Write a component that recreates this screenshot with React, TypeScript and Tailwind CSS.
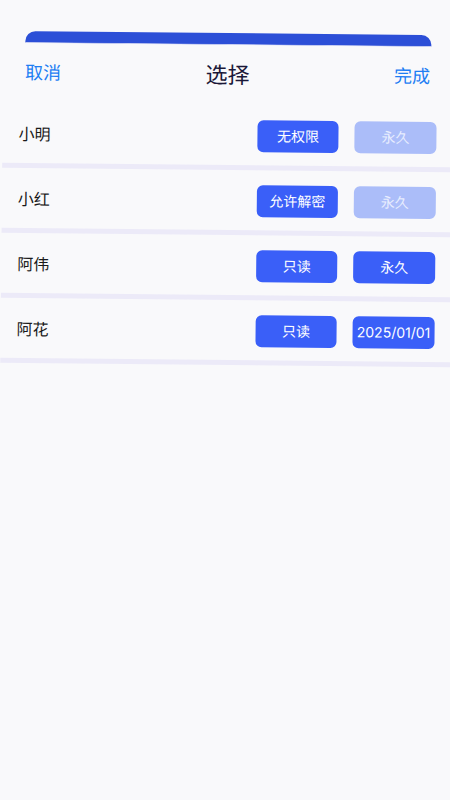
import React from "react";

type Row = { name: string; perm: string; time: string; timeDisabled: boolean };

const rows: Row[] = [
  { name: "小明", perm: "无权限", time: "永久", timeDisabled: true },
  { name: "小红", perm: "允许解密", time: "永久", timeDisabled: true },
  { name: "阿伟", perm: "只读", time: "永久", timeDisabled: false },
  { name: "阿花", perm: "只读", time: "2025/01/01", timeDisabled: false },
];

export default function App() {
  return (
    <div
      className="min-h-screen w-full bg-[#f9f9fb] overflow-hidden"
      style={{ fontFamily: 'Inter, "Noto Sans CJK SC", sans-serif' }}
    >
      <div className="w-[450px] rotate-[0.55deg] pt-[33px]">
        <div className="pl-[24px] pr-[20px]">
          <div className="h-[12px] rounded-t-[10px] bg-[#2c4fd7] border-b border-[#c9cff2]" />
        </div>
        <div className="h-[59px] flex items-center justify-between pl-[24px] pr-[21px]">
          <span className="text-[18px] text-[#1d7ef3] leading-none">取消</span>
          <span className="text-[22px] text-[#1b1838] leading-none">选择</span>
          <span className="text-[18px] text-[#1d7ef3] leading-none">完成</span>
        </div>
        <div className="mt-[3px] flex flex-col">
          {rows.map((r) => (
            <div key={r.name} className="flex flex-col">
              <div className="h-[58px] flex items-center pl-[18px] pr-[14px]">
                <span className="flex-1 text-[16px] text-[#1a1a1a] leading-none">{r.name}</span>
                <div className="w-[81px] h-[32px] rounded-[6px] bg-[#3a5ff8] flex items-center justify-center text-[14px] text-white leading-none">
                  {r.perm}
                </div>
                <div
                  className={
                    r.timeDisabled
                      ? "ml-[16px] w-[82px] h-[32px] rounded-[6px] bg-[#abbdf9] flex items-center justify-center text-[14px] text-[#e8edfe] leading-none"
                      : "ml-[16px] w-[82px] h-[32px] rounded-[6px] bg-[#3a5ff8] flex items-center justify-center text-[14px] text-white leading-none"
                  }
                >
                  {r.time}
                </div>
              </div>
              <div className="ml-[2px] mr-[-6px] h-[5px] bg-[#eceaf8]" />
              <div className="h-[2px]" />
            </div>
          ))}
        </div>
      </div>
    </div>
  );
}
